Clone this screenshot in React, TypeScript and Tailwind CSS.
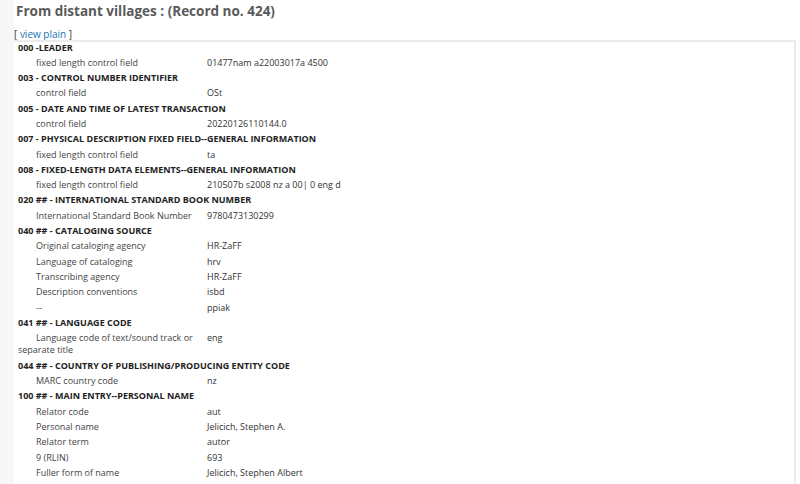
const fields: { tag: string; subs: [string, string][] }[] = [
  { tag: '000 -LEADER', subs: [['fixed length control field', '01477nam a22003017a 4500']] },
  { tag: '003 - CONTROL NUMBER IDENTIFIER', subs: [['control field', 'OSt']] },
  { tag: '005 - DATE AND TIME OF LATEST TRANSACTION', subs: [['control field', '20220126110144.0']] },
  { tag: '007 - PHYSICAL DESCRIPTION FIXED FIELD--GENERAL INFORMATION', subs: [['fixed length control field', 'ta']] },
  { tag: '008 - FIXED-LENGTH DATA ELEMENTS--GENERAL INFORMATION', subs: [['fixed length control field', '210507b s2008 nz a 00| 0 eng d']] },
  { tag: '020 ## - INTERNATIONAL STANDARD BOOK NUMBER', subs: [['International Standard Book Number', '9780473130299']] },
  {
    tag: '040 ## - CATALOGING SOURCE',
    subs: [
      ['Original cataloging agency', 'HR-ZaFF'],
      ['Language of cataloging', 'hrv'],
      ['Transcribing agency', 'HR-ZaFF'],
      ['Description conventions', 'isbd'],
      ['--', 'ppiak'],
    ],
  },
  { tag: '041 ## - LANGUAGE CODE', subs: [['Language code of text/sound track or separate title', 'eng']] },
  { tag: '044 ## - COUNTRY OF PUBLISHING/PRODUCING ENTITY CODE', subs: [['MARC country code', 'nz']] },
  {
    tag: '100 ## - MAIN ENTRY--PERSONAL NAME',
    subs: [
      ['Relator code', 'aut'],
      ['Personal name', 'Jelicich, Stephen A.'],
      ['Relator term', 'autor'],
      ['9 (RLIN)', '693'],
      ['Fuller form of name', 'Jelicich, Stephen Albert'],
    ],
  },
]

export default function App() {
  return (
    <div className="h-[484px] w-[800px] overflow-hidden bg-white font-['Open_Sans',sans-serif]">
      <div className="flex h-full">
        <div className="w-[14px] shrink-0 bg-[#f7f7f7]" />
        <div className="flex flex-1 flex-col pr-[4px]">
          <h1 className="pt-[2px] pl-[2px] text-[13.5px] leading-[18px] font-bold text-[#5a5a5a]">
            From distant villages : (Record no. 424)
          </h1>
          <div className="mt-[8px] text-[10px] leading-[12px] text-[#333]">
            [ <a className="text-[#1a73b0]">view plain</a> ]
          </div>
          <div className="flex-1 border-t-2 border-r-2 border-[#ebebeb] pl-[4px] text-[9px] text-[#333]">
            <div className="-mt-[2px]">
              {fields.map((f) => (
                <div key={f.tag}>
                  <div className="py-[1.5px] leading-[12.3px] font-bold text-[#222]">{f.tag}</div>
                  {f.subs.map(([label, value]) => (
                    <div key={label} className="flex py-[1.5px] leading-[12.3px]">
                      <div className="w-[189px] shrink-0 indent-[18px] text-[#444]">{label}</div>
                      <div>{value}</div>
                    </div>
                  ))}
                </div>
              ))}
            </div>
          </div>
        </div>
      </div>
    </div>
  )
}
